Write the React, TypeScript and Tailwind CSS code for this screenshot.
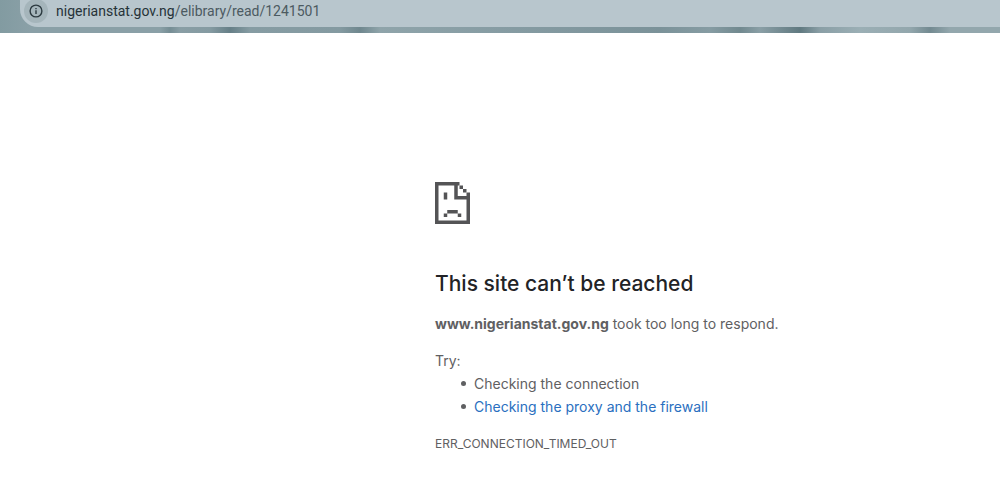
type Suggestion = {
  label: string
  href?: string
}

const suggestions: Suggestion[] = [
  { label: 'Checking the connection' },
  { label: 'Checking the proxy and the firewall', href: '#proxy' },
]

function InfoIcon() {
  return (
    <svg viewBox="0 0 14 14" className="size-3.5" fill="none" aria-hidden="true">
      <circle cx="7" cy="7" r="5.9" stroke="currentColor" strokeWidth="1.4" />
      <path d="M7 6.3v3.6M7 3.9v1.4" stroke="currentColor" strokeWidth="1.4" />
    </svg>
  )
}

function SadPageIcon() {
  return (
    <svg
      viewBox="0 0 20 24"
      className="h-[42px] w-[35px] text-[#545456]"
      fill="currentColor"
      aria-hidden="true"
    >
      {/* page outline */}
      <path d="M0 0h14v2H2v20h16V10h-7V2h2v6h5V6h2v18H0z" />
      {/* folded corner */}
      <path d="M14 2h2v2h-2zM16 4h2v2h-2z" />
      {/* eye and mouth */}
      <path d="M5 6h2v4H5zM7 16h6v2H7zM5 18h2v2H5zM13 18h2v2h-2z" />
    </svg>
  )
}

function AddressBar() {
  return (
    <header className="bg-[linear-gradient(to_right,#829ba1_0%,#8aa0a7_3%,#8aa0a7_16%,#758d94_17%,#899ea5_18%,#859ba2_21%,#667f87_23%,#869ca3_25%,#849aa1_34%,#6f878e_36%,#8fa4aa_38%,#869ca3_50%,#7b9299_66%,#869ca3_71%,#71898f_74%,#8a9fa6_76%,#607980_80%,#8a9fa6_82%,#9bafb5_86%,#93a7ad_91%,#738a91_93%,#93a7ad_95%,#93a7ad_100%)] pb-1.5 pl-5">
      <div className="flex h-[27px] items-start rounded-bl-[18px] bg-[#b8c6cd] pl-1">
        <button
          type="button"
          aria-label="View site information"
          className="-mt-px flex size-6 shrink-0 items-center justify-center rounded-full bg-[#a5b5bb] text-[#2c3a40]"
        >
          <InfoIcon />
        </button>
        <div className="relative ml-2 flex-1 font-['Roboto',sans-serif] text-sm leading-[22px] text-[#4c5a61]">
          {/* the styled copy sits under the field so the host can be darker */}
          <div aria-hidden="true">
            <span className="text-[#263238]">nigerianstat.gov.ng</span>
            /elibrary/read/1241501
          </div>
          <input
            type="text"
            aria-label="Address"
            className="absolute inset-0 w-full bg-transparent text-transparent outline-none"
            defaultValue="nigerianstat.gov.ng/elibrary/read/1241501"
          />
        </div>
      </div>
    </header>
  )
}

export default function App() {
  return (
    <div className="min-h-screen bg-white font-['Inter',sans-serif]">
      <AddressBar />
      <main className="ml-[43.5%] pt-[149px] text-sm leading-[23px] text-[#5f6062]">
        <SadPageIcon />
        <h1 className="pt-11 text-[21px] leading-8 font-medium text-[#222326]">
          This site can’t be reached
        </h1>
        <p className="pt-3">
          <strong className="font-bold">www.nigerianstat.gov.ng</strong> took too
          long to respond.
        </p>
        <p className="pt-3.5">Try:</p>
        <ul className="pl-[26px]">
          {suggestions.map(({ label, href }) => (
            <li key={label} className="flex items-center gap-2">
              <span className="size-[5px] rounded-full bg-[#5f6062]" />
              {href ? (
                <a href={href} className="text-[#2a6fc0]">
                  {label}
                </a>
              ) : (
                label
              )}
            </li>
          ))}
        </ul>
        <p className="pt-3.5 text-xs leading-6">ERR_CONNECTION_TIMED_OUT</p>
      </main>
    </div>
  )
}
